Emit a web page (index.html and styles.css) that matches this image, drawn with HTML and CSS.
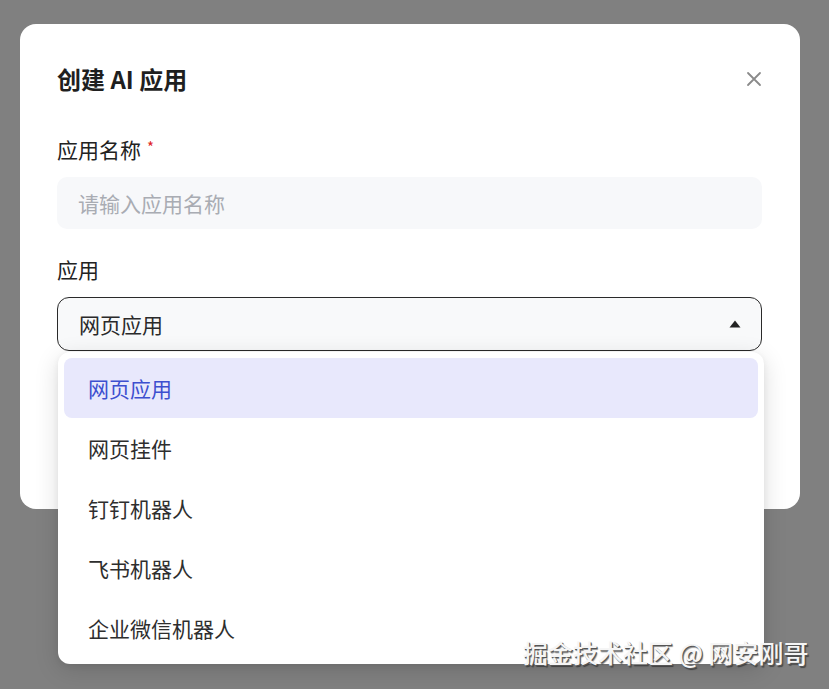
FILE: index.html
```html
<!DOCTYPE html>
<html lang="zh-CN">
<head>
<meta charset="utf-8">
<title>创建 AI 应用</title>
<link rel="stylesheet" href="styles.css">
</head>
<body>
<div class="modal">
  <div class="modal-header">
    <h2 class="modal-title">创建 AI 应用</h2>
    <button class="close-btn" aria-label="关闭">
      <svg width="16" height="16" viewBox="0 0 16 16"><path d="M2 2 L14 14 M14 2 L2 14" stroke="#8a8a8a" stroke-width="1.8" stroke-linecap="round" fill="none"/></svg>
    </button>
  </div>
  <div class="field">
    <label class="label">应用名称<span class="req">*</span></label>
    <div class="input">请输入应用名称</div>
  </div>
  <div class="field field-select">
    <label class="label">应用</label>
    <div class="select-wrap">
      <div class="select">
        <span>网页应用</span>
        <svg class="caret" width="12" height="8" viewBox="0 0 12 8"><path d="M6 0.5 L11.5 7.5 L0.5 7.5 Z" fill="#222"/></svg>
      </div>
      <ul class="menu">
        <li class="item active">网页应用</li>
        <li class="item">网页挂件</li>
        <li class="item">钉钉机器人</li>
        <li class="item">飞书机器人</li>
        <li class="item">企业微信机器人</li>
      </ul>
    </div>
  </div>
</div>
<div class="watermark">掘金技术社区 @ 网安刚哥</div>
</body>
</html>
```
FILE: styles.css
```css
html, body {
  margin: 0;
  padding: 0;
}
body {
  width: 829px;
  height: 689px;
  background: #808080;
  font-family: "Noto Sans CJK SC", "Noto Sans", sans-serif;
  position: relative;
  overflow: hidden;
  padding-top: 24px;
  box-sizing: border-box;
}
.modal {
  margin-left: 20px;
  width: 780px;
  height: 485px;
  background: #fff;
  border-radius: 16px;
  box-sizing: border-box;
  padding: 39px 37px 0 37px;
}
.modal-header {
  display: flex;
  align-items: center;
  justify-content: space-between;
  height: 32px;
}
.modal-title {
  margin: 0;
  font-size: 24px;
  line-height: 32px;
  font-weight: 700;
  color: #1f1f1f;
}
.close-btn {
  border: 0;
  background: none;
  padding: 0;
  width: 16px;
  height: 16px;
  margin-right: 1px;
  display: flex;
}
.field {
  margin-top: 38px;
}
.field-select {
  margin-top: 26px;
}
.label {
  display: block;
  font-size: 21px;
  line-height: 28px;
  color: #222;
}
.req {
  color: #e02424;
  font-size: 15px;
  margin-left: 6px;
  vertical-align: 5px;
}
.input {
  margin-top: 14px;
  height: 52px;
  width: 705px;
  background: #f7f8fa;
  border-radius: 10px;
  box-sizing: border-box;
  padding-left: 21px;
  display: flex;
  align-items: center;
  font-size: 21px;
  color: #a9acb3;
}
.select-wrap {
  position: relative;
  margin-top: 14px;
  width: 705px;
}
.select {
  height: 54px;
  box-sizing: border-box;
  border: 1px solid #2a2a2a;
  border-radius: 12px;
  background: #f8f9fa;
  padding: 0 20px 0 21px;
  display: flex;
  align-items: center;
  justify-content: space-between;
  font-size: 21px;
  color: #2a2a2a;
}
.menu {
  position: absolute;
  left: 1px;
  top: 55px;
  width: 706px;
  margin: 0;
  padding: 6px;
  box-sizing: border-box;
  list-style: none;
  background: #fff;
  border-radius: 12px;
  box-shadow: 0 6px 24px rgba(0, 0, 0, 0.14), 0 2px 6px rgba(0, 0, 0, 0.06);
}
.item {
  height: 60px;
  display: flex;
  align-items: center;
  padding-left: 24px;
  font-size: 21px;
  color: #2e2e2e;
  border-radius: 8px;
}
.item.active {
  background: #e8e8fc;
  color: #3d4fcf;
}
.watermark {
  position: absolute;
  left: 523px;
  top: 634px;
  font-family: "Noto Sans CJK SC", sans-serif;
  font-size: 25px;
  line-height: 36px;
  font-weight: 500;
  color: #f5f5f5;
  white-space: nowrap;
  text-shadow: 1px 1px 0 #555, 1.5px 1.5px 1px rgba(0,0,0,0.45);
}
```
